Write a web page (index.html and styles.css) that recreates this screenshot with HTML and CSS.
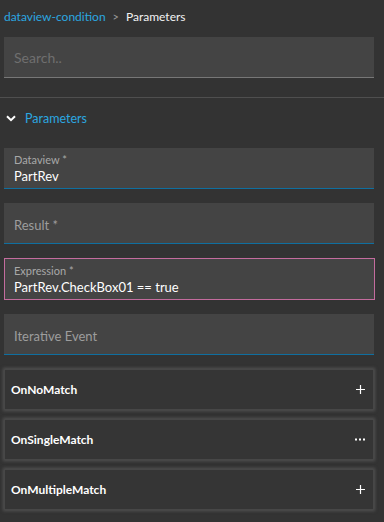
FILE: index.html
```html
<!DOCTYPE html>
<html lang="en">
<head>
    <meta charset="UTF-8">
    <meta name="viewport" content="width=device-width, initial-scale=1.0">
    <title>Parameters</title>
    <link rel="stylesheet" href="styles.css">
</head>
<body>
    <!-- Хлебные крошки -->
    <div class="breadcrumb">
        <span class="crumbLink">dataview-condition</span>
        <span class="crumbSep">&gt;</span>
        <span class="crumbCurrent">Parameters</span>
    </div>

    <!-- Поиск -->
    <div class="searchBox">
        <span class="placeholder">Search..</span>
    </div>

    <div class="divider"></div>

    <!-- Секция параметров -->
    <div class="sectionHeader">
        <svg class="chevron" width="10" height="7" viewBox="0 0 10 7">
            <path d="M1 1.2 L5 5.2 L9 1.2" fill="none" stroke="#fff" stroke-width="2"/>
        </svg>
        <span>Parameters</span>
    </div>

    <div class="fieldList">
        <div class="field filled">
            <div class="fieldLabel">Dataview *</div>
            <div class="fieldValue">PartRev</div>
        </div>
        <div class="field empty">
            <div class="fieldPlaceholder">Result *</div>
        </div>
        <div class="field filled invalid">
            <div class="fieldLabel">Expression *</div>
            <div class="fieldValue">PartRev.CheckBox01 == true</div>
        </div>
        <div class="field empty">
            <div class="fieldPlaceholder">Iterative Event</div>
        </div>
    </div>

    <!-- События -->
    <div class="eventList">
        <div class="eventCard">
            <span class="eventName">OnNoMatch</span>
            <svg class="eventAction" width="9" height="9" viewBox="0 0 9 9">
                <path d="M4.5 0 V9 M0 4.5 H9" stroke="#fff" stroke-width="1.2"/>
            </svg>
        </div>
        <div class="eventCard">
            <span class="eventName">OnSingleMatch</span>
            <svg class="eventAction" width="10" height="9" viewBox="0 0 10 9">
                <rect x="0" y="3.5" width="2" height="2" fill="#fff"/>
                <rect x="4" y="3.5" width="2" height="2" fill="#fff"/>
                <rect x="8" y="3.5" width="2" height="2" fill="#fff"/>
            </svg>
        </div>
        <div class="eventCard">
            <span class="eventName">OnMultipleMatch</span>
            <svg class="eventAction" width="9" height="9" viewBox="0 0 9 9">
                <path d="M4.5 0 V9 M0 4.5 H9" stroke="#fff" stroke-width="1.2"/>
            </svg>
        </div>
    </div>
</body>
</html>
```

FILE: styles.css
```css
/* Основной стиль */
body {
    font-family: Lato, "Open Sans", sans-serif;
    background-color: #333333;
    color: #fff;
    margin: 0;
    padding: 0;
    width: 384px;
    height: 522px;
    overflow: hidden;
}

/* Хлебные крошки */
.breadcrumb {
    display: flex;
    align-items: center;
    gap: 7px;
    height: 33px;
    padding-left: 4px;
    font-size: 12px;
    line-height: 33px;
}

.crumbLink {
    color: #2ba7e0;
}

.crumbSep {
    color: #9a9a9a;
    font-size: 11px;
}

.crumbCurrent {
    color: #f2f2f2;
}

/* Поиск */
.searchBox {
    display: flex;
    align-items: center;
    margin: 4px 10px 0 4px;
    height: 40px;
    padding-left: 10px;
    background-color: #444444;
    border-bottom: 1px solid #777;
}

.placeholder {
    color: #6f6f6f;
    font-size: 14px;
}

.divider {
    height: 1px;
    background-color: #4f4f4f;
    margin-top: 19px;
}

/* Заголовок секции */
.sectionHeader {
    display: flex;
    align-items: center;
    gap: 9px;
    height: 40px;
    padding-left: 6px;
    color: #2ba7e0;
    font-size: 12.5px;
}

/* Поля */
.fieldList {
    display: flex;
    flex-direction: column;
    gap: 14px;
    margin: 10px 10px 0 4px;
}

.field {
    height: 40px;
    background-color: #444444;
    border-bottom: 1px solid #0f6fa0;
    padding: 0 10px;
    display: flex;
    flex-direction: column;
    justify-content: center;
    box-sizing: content-box;
}

.field.filled {
    padding-top: 2px;
    height: 38px;
}

.field.invalid {
    border: 1px solid #c46c9e;
    margin-right: -1px;
    padding: 2px 9px 0;
    height: 38px;
}

.fieldLabel {
    color: #a8a8a8;
    font-size: 11px;
    line-height: 14px;
}

.fieldValue {
    color: #fff;
    font-size: 13px;
    line-height: 18px;
}

.fieldPlaceholder {
    color: #9d9d9d;
    font-size: 13px;
    padding-top: 3px;
}

/* Карточки событий */
.eventList {
    display: flex;
    flex-direction: column;
    gap: 9px;
    margin: 14px 10px 0 4px;
}

.eventCard {
    display: flex;
    align-items: center;
    justify-content: space-between;
    height: 39px;
    padding: 0 8px 0 6px;
    background-color: #353535;
    border: 1px solid #474747;
    box-shadow: 0 0 3px 1px rgba(90, 90, 90, 0.8);
}

.eventName {
    font-size: 12px;
    font-weight: bold;
    color: #fff;
}

.eventAction {
    display: block;
}
```
